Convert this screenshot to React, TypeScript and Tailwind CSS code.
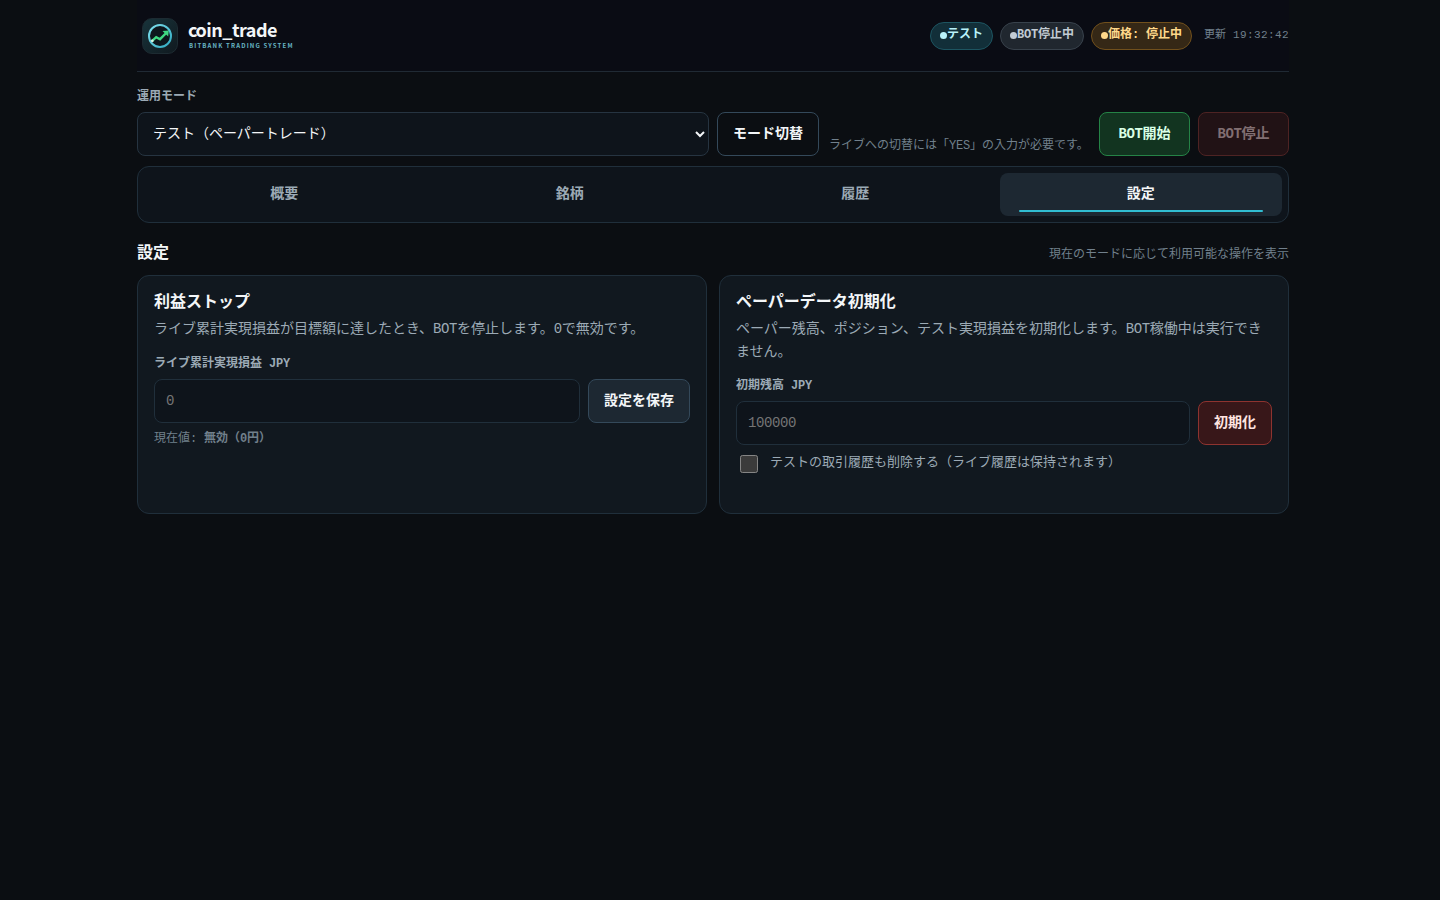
import type { ReactNode } from 'react';

const TABS = ['概要', '銘柄', '履歴', '設定'];

// Latin runs sit on whole-pixel advances: 7px at 12px text, 8px at 14px text.
function L12({ children }: { children: ReactNode }) {
  return <span className="tracking-[-0.2px]">{children}</span>;
}

function L14({ children }: { children: ReactNode }) {
  return <span className="tracking-[-0.4px]">{children}</span>;
}

function Pill({ className, children }: { className: string; children: ReactNode }) {
  return (
    <span className={`flex h-7 items-center rounded-full border px-[9px] text-[12px] font-bold leading-none ${className}`}>
      <i className="block size-[7px] rounded-full bg-current" />
      <span className="relative -top-px">{children}</span>
    </span>
  );
}

function Logo() {
  return (
    <svg className="size-9" viewBox="0 0 36 36" fill="none">
      <defs>
        <linearGradient id="tile" x1="0" y1="0" x2="1" y2="1">
          <stop stopColor="#18343b" />
          <stop offset="1" stopColor="#10191f" />
        </linearGradient>
        <linearGradient id="ring" x1="0" y1="0" x2="1" y2="1">
          <stop stopColor="#7fe0ee" />
          <stop offset="1" stopColor="#2fa9c0" />
        </linearGradient>
      </defs>
      <rect x="0.5" y="0.5" width="35" height="35" rx="9.5" fill="url(#tile)" stroke="#1d2b32" />
      <circle cx="18" cy="18" r="11" fill="#0d171d" stroke="url(#ring)" strokeWidth="2" />
      <path d="M10.2 22.8L14.2 19.2L18 21.2L24.2 15" stroke="#3fd982" strokeWidth="2.4" />
      <path d="M20.5 13L26.8 12.4L26.2 18.6Z" fill="#3fd982" />
      <circle cx="10.3" cy="22.8" r="1.4" fill="#d9f7e4" />
    </svg>
  );
}

export default function App() {
  return (
    <div className="min-h-screen bg-[#0b0e12] font-['Liberation_Mono','Noto_Sans_CJK_JP',monospace] text-[14px] text-[#f3f6f8] [color-scheme:dark]">
      <div className="ml-[137px] w-[1152px]">
        <header className="flex h-[72px] items-center justify-between border-b border-[#202a34] bg-[#0a0c14]">
          <div className="flex items-center gap-[10px] pl-[5px]">
            <Logo />
            <div className="flex flex-col font-['Noto_Sans_CJK_JP',sans-serif] font-bold">
              <span className="-mt-[3px] text-[18px] leading-[20px] tracking-[-0.5px]">
                <span className="tracking-[-2px]">c</span>oin_trade
              </span>
              <span className="mt-[3px] pl-px text-[6px] leading-[8px] tracking-[1.17px] text-[#67b5c4]">BITBANK TRADING SYSTEM</span>
            </div>
          </div>
          <div className="flex items-center gap-[7px]">
            <Pill className="border-[#1d5561] bg-[#122f39] text-[#b8f2fa]">テスト</Pill>
            <Pill className="border-[#38424c] bg-[#20272f] text-[#c2cbd3]"><L12>BOT</L12>停止中</Pill>
            <Pill className="border-[#71501c] bg-[#352816] text-[#ffd98a]">価格<L12>: </L12>停止中</Pill>
            <span className="ml-[5px] text-[11px] text-[#71808c]">更新<span className="tracking-[0.4px]"> 19:32:42</span></span>
          </div>
        </header>

        <div className="mt-[17px] text-[12px] font-bold leading-4 text-[#9caab5]">運用モード</div>
        <div className="mt-[7px] flex h-11">
          <select className="h-11 w-[572px] rounded-[8px] border border-[#263441] bg-[#0e141b] px-[11px] text-[14px]">
            <option>テスト（ペーパートレード）</option>
          </select>
          <button className="ml-2 w-[102px] rounded-[8px] border border-[#34495a] font-bold">モード切替</button>
          <span className="ml-[10px] w-[270px] self-end whitespace-nowrap pb-px text-[12px] leading-[18px] text-[#71808c]">ライブへの切替には「<L12>YES</L12>」の入力が必要です。</span>
          <button className="w-[91px] rounded-[8px] border border-[#258346] bg-[#123420] font-bold text-[#d9ffe5]"><L14>BOT</L14>開始</button>
          <button className="ml-2 w-[91px] rounded-[8px] border border-[#4e2323] bg-[#211215] font-bold text-[#816f72]"><L14>BOT</L14>停止</button>
        </div>

        <nav className="mt-[10px] grid h-[57px] grid-cols-4 gap-1 rounded-[12px] border border-[#202f3b] bg-[#0e141b] py-[6px] pl-[5.5px] pr-[6.5px]">
          {TABS.map((tab) =>
            tab === '設定' ? (
              <button key={tab} className="relative rounded-[8px] bg-[#1d2832] font-bold">
                {tab}
                <span className="absolute inset-x-[19px] bottom-1 h-[2px] rounded-full bg-[#31bdd2]" />
              </button>
            ) : (
              <button key={tab} className="font-bold text-[#9caab5]">{tab}</button>
            ),
          )}
        </nav>

        <div className="mt-[19px] flex h-[24px] items-center justify-between">
          <h2 className="text-[16px] font-bold leading-6">設定</h2>
          <span className="relative top-px text-[12px] text-[#71808c]">現在のモードに応じて利用可能な操作を表示</span>
        </div>

        <div className="mt-[9px] grid h-[239px] grid-cols-2 gap-3">
          <section className="rounded-[12px] border border-[#202f3b] bg-[#11181f] px-4 pt-[15px]">
            <h3 className="text-[16px] font-bold leading-6">利益ストップ</h3>
            <p className="mt-[3px] leading-[23px] text-[#9caab5]">ライブ累計実現損益が目標額に達したとき、<L14>BOT</L14>を停止します。<L14>0</L14>で無効です。</p>
            <div className="mt-[15px] text-[12px] font-bold leading-4 text-[#9caab5]">ライブ累計実現損益<L12> JPY</L12></div>
            <div className="mt-[7px] flex h-11 gap-2">
              <input placeholder="0" className="min-w-0 flex-1 rounded-[8px] border border-[#202f3b] bg-[#0e141b] px-[11px] tracking-[-0.4px] placeholder:text-[#757575]" />
              <button className="w-[102px] rounded-[8px] border border-[#34495a] bg-[#1d2832] font-bold">設定を保存</button>
            </div>
            <div className="mt-[7px] text-[12px] leading-[18px] text-[#71808c]">現在値<L12>: </L12><b>無効（<L12>0</L12>円）</b></div>
          </section>
          <section className="rounded-[12px] border border-[#202f3b] bg-[#11181f] px-4 pt-[15px]">
            <h3 className="text-[16px] font-bold leading-6">ペーパーデータ初期化</h3>
            <p className="mt-[3px] leading-[23px] text-[#9caab5]">ペーパー残高、ポジション、テスト実現損益を初期化します。<L14>BOT</L14>稼働中は実行できません。</p>
            <div className="mt-[14px] text-[12px] font-bold leading-4 text-[#9caab5]">初期残高<L12> JPY</L12></div>
            <div className="mt-[7px] flex h-11 gap-2">
              <input placeholder="100000" className="min-w-0 flex-1 rounded-[8px] border border-[#202f3b] bg-[#0e141b] px-[11px] tracking-[-0.4px] placeholder:text-[#757575]" />
              <button className="w-[74px] rounded-[8px] border border-[#8e332f] bg-[#381719] font-bold text-[#ffe4e0]">初期化</button>
            </div>
            <label className="mt-[8px] flex items-start gap-3 pl-1 text-[13px] leading-[20px] text-[#9caab5]">
              <input type="checkbox" className="mt-[2px] size-[18px]" />
              <span>テストの取引履歴も削除する（ライブ履歴は保持されます）</span>
            </label>
          </section>
        </div>
      </div>
    </div>
  );
}
